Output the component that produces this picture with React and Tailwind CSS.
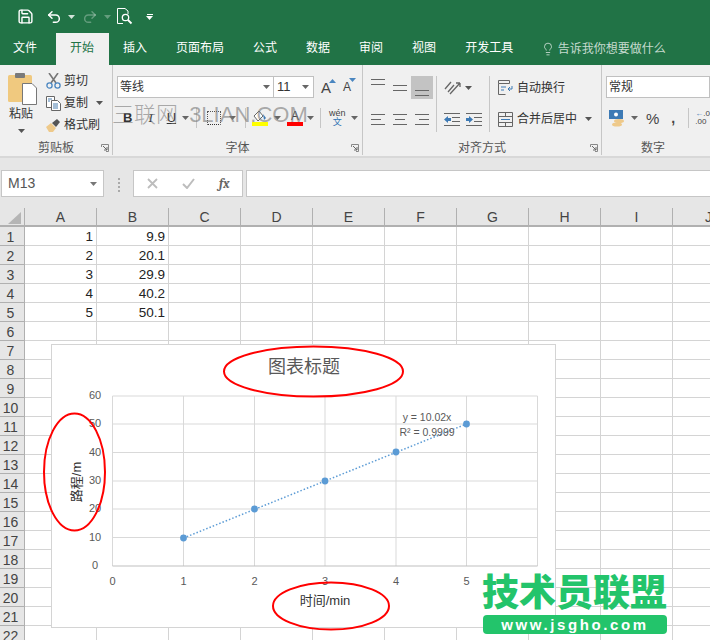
import { Save, Undo2, Redo2, Lightbulb } from 'lucide-react'

const FONT = 'font-["Liberation_Sans","Noto_Sans_CJK_SC",sans-serif]'

const tabs = ['插入', '页面布局', '公式', '数据', '审阅', '视图', '开发工具']
const cols = ['A', 'B', 'C', 'D', 'E', 'F', 'G', 'H', 'I', 'J']
const rows = Array.from({ length: 22 }, (_, i) => i + 1)
const data = { 1: ['1', '9.9'], 2: ['2', '20.1'], 3: ['3', '29.9'], 4: ['4', '40.2'], 5: ['5', '50.1'] }

const points = [
  [183.5, 538],
  [254.5, 509],
  [325, 481],
  [396, 452],
  [466.5, 424],
]
const xTicks = [112.5, 183.5, 254.5, 325, 396, 466.5, 537.5]
const yTicks = [396, 424, 452.5, 481, 509, 537.5, 566]

function Caret({ className = '' }) {
  return (
    <svg width="7" height="4" viewBox="0 0 7 4" className={className}>
      <path d="M0 0h7L3.5 4z" fill="currentColor" />
    </svg>
  )
}

function Lines({ widths, className = '' }) {
  return (
    <span className={`flex flex-col gap-[4px] ${className}`}>
      {widths.map((w, i) => (
        <span key={i} className="h-px bg-[#666]" style={{ width: w }} />
      ))}
    </span>
  )
}

function AlignIcon({ kind }) {
  const a = { left: 'items-start', center: 'items-center', right: 'items-end' }[kind]
  return (
    <span className="flex h-[22px] w-[22px] items-center justify-center">
      <Lines widths={[14, 10, 14]} className={`${a} w-[14px]`} />
    </span>
  )
}

function Launcher() {
  return (
    <svg width="8" height="8" viewBox="0 0 8 8" className="absolute bottom-[3px] right-[3px]">
      <path d="M.5 3V.5H7.5V7.5H5" fill="none" stroke="#888" />
      <path d="M2 2l4 4M6 3v3H3" fill="none" stroke="#666" />
    </svg>
  )
}

function Group({ label, width, children }) {
  return (
    <div className="relative h-[90px] shrink-0 border-r border-[#c6c6c6]" style={{ width }}>
      <div className="h-[75px]">{children}</div>
      <div className="text-center text-[12px] leading-[16px] text-[#555]">{label}</div>
      <Launcher />
    </div>
  )
}

function ClipboardGroup() {
  return (
    <div className="flex pl-[8px] pt-[7px]">
      <div className="flex w-[26px] flex-col items-center">
        <svg width="29" height="33" viewBox="0 0 29 33" className="ml-[3px] shrink-0">
          <rect x="0" y="3" width="24" height="27" rx="1.5" fill="#f0c97f" />
          <rect x="7" y="1" width="10" height="5" rx="1" fill="#7a7a7a" />
          <path d="M14.5 11.5H24l4.5 4.5V32.5H14.5z" fill="#fff" stroke="#777" />
        </svg>
        <span className="mt-[1px] text-[12px] leading-[16px] text-[#333]">粘贴</span>
        <Caret className="mt-[7px] text-[#555]" />
      </div>
      <div className="ml-[12px] flex flex-col gap-[4px] text-[12px] leading-[18px] text-[#333]">
        <div className="flex items-center gap-[3px]">
          <svg width="15" height="16" viewBox="0 0 15 16">
            <path d="M3 0l7 10M12 0L5 10" stroke="#777" strokeWidth="1.6" />
            <circle cx="3.5" cy="12.5" r="2.6" fill="none" stroke="#4a86c0" strokeWidth="1.3" />
            <circle cx="11.5" cy="12.5" r="2.6" fill="none" stroke="#4a86c0" strokeWidth="1.3" />
          </svg>
          <span>剪切</span>
        </div>
        <div className="flex items-center gap-[3px]">
          <svg width="15" height="15" viewBox="0 0 15 15">
            <path d="M.5.5h8v11h-8z" fill="#fff" stroke="#666" />
            <path d="M5.5 4.5h6l3 3v7h-9z" fill="#fff" stroke="#666" />
            <path d="M2 3h4M2 5h2M7 8h5M7 10h5M7 12h5" stroke="#4a7fb0" />
          </svg>
          <span>复制</span>
          <Caret className="ml-[5px] text-[#555]" />
        </div>
        <div className="flex items-center gap-[3px]">
          <svg width="15" height="14" viewBox="0 0 15 14">
            <path d="M0 9l5-4 5 5-3 4H3z" fill="#eec98a" />
            <path d="M6 5l5-4 3 3-4 5z" fill="#555" />
          </svg>
          <span>格式刷</span>
        </div>
      </div>
    </div>
  )
}

function FontGroup() {
  return (
    <div className="pl-[4px] pt-[11px]">
      <div className="flex items-center">
        <div className="flex h-[22px] w-[157px] items-center justify-between border border-[#c0c0c0] bg-white pl-[2px] pr-[3px] text-[12px] text-[#333]">
          <span>等线</span>
          <Caret className="text-[#666]" />
        </div>
        <div className="flex h-[22px] w-[40px] items-center justify-between border border-l-0 border-[#c0c0c0] bg-white pl-[3px] pr-[4px] text-[13px] text-[#333]">
          <span>11</span>
          <Caret className="text-[#666]" />
        </div>
        <span className="relative ml-[7px] text-[15px] leading-none text-[#444]">
          A
          <Caret className="absolute -right-[5px] -top-[1px] rotate-180 text-[#4a86c0]" />
        </span>
        <span className="relative ml-[12px] text-[12px] leading-none text-[#444]">
          A
          <Caret className="absolute -right-[5px] -top-[3px] text-[#4a86c0]" />
        </span>
      </div>
      <div className="mt-[8px] flex h-[24px] items-center text-[13px] text-[#333]">
        <span className="ml-[6px] font-bold">B</span>
        <span className="ml-[16px] font-serif italic">I</span>
        <span className="ml-[14px] underline">U</span>
        <Caret className="ml-[6px] text-[#666]" />
        <span className="ml-[7px] h-[20px] w-px bg-[#c6c6c6]" />
        <span className="ml-[10px] h-[14px] w-[14px] border border-dotted border-[#555] border-b-[#333]" />
        <Caret className="ml-[8px] text-[#666]" />
        <span className="ml-[9px] h-[20px] w-px bg-[#c6c6c6]" />
        <span className="ml-[6px] flex w-[16px] flex-col items-center">
          <svg width="14" height="11" viewBox="0 0 14 11">
            <path d="M6 0L1 5l4 5 5-5z" fill="#fff" stroke="#666" />
            <path d="M10 3l3 4-2 2z" fill="#3d7ab5" />
          </svg>
          <span className="h-[4px] w-[16px] bg-[#ffff00]" />
        </span>
        <Caret className="ml-[6px] text-[#666]" />
        <span className="ml-[6px] flex w-[16px] flex-col items-center text-[12px] leading-[11px] text-[#444]">
          A<span className="h-[4px] w-[16px] bg-[#ff0000]" />
        </span>
        <Caret className="ml-[4px] text-[#666]" />
        <span className="ml-[6px] h-[20px] w-px bg-[#c6c6c6]" />
        <span className="ml-[8px] flex flex-col items-center text-[9px] leading-[9px] text-[#444]">
          wén<span className="text-[#2f75b5]">文</span>
        </span>
        <Caret className="ml-[5px] text-[#666]" />
      </div>
    </div>
  )
}

function AlignGroup() {
  return (
    <div className="flex pl-[4px] pt-[11px]">
      <div className="w-[70px] border-r border-[#c6c6c6] pb-[2px]">
        <div className="flex items-center">
          <span className="flex h-[23px] w-[22px] items-start justify-center pt-[3px]"><Lines widths={[14, 14]} /></span>
          <span className="flex h-[23px] w-[22px] items-center justify-center"><Lines widths={[14, 14]} /></span>
          <span className="flex h-[23px] w-[22px] items-end justify-center bg-[#c3c3c3] pb-[3px]"><Lines widths={[14, 14]} /></span>
        </div>
        <div className="mt-[9px] flex">
          <AlignIcon kind="left" />
          <AlignIcon kind="center" />
          <AlignIcon kind="right" />
        </div>
      </div>
      <div className="w-[53px] border-r border-[#c6c6c6] pl-[7px]">
        <div className="flex h-[23px] items-center text-[#555]">
          <svg width="17" height="15" viewBox="0 0 17 15">
            <path d="M1 9l6-7M4 12l6-7M6 14L16 3M16 3h-4M16 3v4" fill="none" stroke="#666" strokeWidth="1.3" />
          </svg>
          <Caret className="ml-[4px]" />
        </div>
        <div className="mt-[9px] flex h-[22px] items-center gap-[6px]">
          <svg width="16" height="13" viewBox="0 0 16 13">
            <path d="M0 .5h16M8 4.5h8M8 8.5h8M0 12.5h16" stroke="#666" />
            <path d="M0 6.5L4 3v2h3v3H4v2z" fill="#3d7ab5" />
          </svg>
          <svg width="16" height="13" viewBox="0 0 16 13">
            <path d="M0 .5h16M8 4.5h8M8 8.5h8M0 12.5h16" stroke="#666" />
            <path d="M7 6.5L3 3v2H0v3h3v2z" fill="#3d7ab5" />
          </svg>
        </div>
      </div>
      <div className="pl-[8px] text-[12px] text-[#333]">
        <div className="flex h-[23px] items-center gap-[3px]">
          <svg width="16" height="15" viewBox="0 0 16 15">
            <path d="M.5.5h11v3H.5zM.5 3.5v11h7" fill="none" stroke="#666" />
            <path d="M3 7h5M3 10h3" stroke="#3d7ab5" />
            <path d="M14 6v3h-4M12 7l-2 2 2 2" fill="none" stroke="#3d7ab5" />
          </svg>
          <span>自动换行</span>
        </div>
        <div className="mt-[9px] flex h-[22px] items-center gap-[3px]">
          <svg width="15" height="15" viewBox="0 0 15 15">
            <path d="M.5.5h14v14H.5zM.5 4.5h14M.5 10.5h14M7.5.5v4M7.5 10.5v4" fill="none" stroke="#666" />
            <path d="M3 7.5h9" stroke="#3d7ab5" />
          </svg>
          <span className="ml-[1px]">合并后居中</span>
          <Caret className="ml-[5px] text-[#555]" />
        </div>
      </div>
    </div>
  )
}

function NumberGroup() {
  return (
    <div className="pl-[4px] pt-[11px]">
      <div className="flex h-[22px] items-center border border-[#c0c0c0] bg-white pl-[2px] text-[12px] text-[#333]">常规</div>
      <div className="mt-[9px] flex h-[22px] items-center text-[#444]">
        <svg width="16" height="17" viewBox="0 0 16 17" className="ml-[3px]">
          <rect x="0" y="0" width="14" height="9" fill="#3d7ab5" />
          <circle cx="7" cy="4.5" r="2" fill="#fff" />
          <ellipse cx="10" cy="11" rx="5" ry="2" fill="#eec98a" />
          <ellipse cx="8" cy="14.5" rx="5" ry="2" fill="#eec98a" />
        </svg>
        <Caret className="ml-[6px] text-[#666]" />
        <span className="ml-[8px] text-[15px] leading-none">%</span>
        <span className="ml-[12px] text-[14px] font-bold leading-none">,</span>
        <span className="ml-[13px] h-[20px] w-px bg-[#c6c6c6]" />
        <span className="ml-[6px] text-[8px] leading-[8px]">
          <span className="text-[#3d7ab5]">←</span>.0<br />.00
        </span>
      </div>
    </div>
  )
}

function Chart() {
  return (
    <div className="absolute left-[51px] top-[136px] h-[284px] w-[505px] border border-[#d4d4d4] bg-white">
      <svg width="503" height="282" viewBox="52 345 503 282" className="overflow-visible">
        {xTicks.map((x) => (
          <line key={x} x1={x} x2={x} y1="396" y2="566" stroke="#d9d9d9" />
        ))}
        {yTicks.map((y) => (
          <line key={y} x1="112.5" x2="537.5" y1={y} y2={y} stroke={y === 566 ? '#bfbfbf' : '#d9d9d9'} />
        ))}
        <line x1="183.5" y1="538" x2="466.5" y2="424" stroke="#5b9bd5" strokeWidth="1.5" strokeDasharray="1.5 2" />
        {points.map(([x, y]) => (
          <circle key={x} cx={x} cy={y} r="3.4" fill="#5b9bd5" />
        ))}
        <g fill="#595959" fontSize="11" textAnchor="middle">
          {xTicks.map((x, i) => (
            <text key={x} x={x} y="585">{i}</text>
          ))}
          {yTicks.map((y, i) => (
            <text key={y} x="95" y={y + 3}>{60 - i * 10}</text>
          ))}
        </g>
        <g fill="#595959" fontSize="10.5" textAnchor="middle">
          <text x="427" y="421">y = 10.02x</text>
          <text x="427" y="436">R² = 0.9999</text>
        </g>
        <text x="304" y="373" fontSize="18" fill="#595959" textAnchor="middle" fontFamily="Noto Sans CJK SC">图表标题</text>
        <text x="325" y="605" fontSize="13" fill="#333" textAnchor="middle">时间/min</text>
        <text transform="translate(81 482) rotate(-90)" fontSize="13" fill="#333" textAnchor="middle">路程/m</text>
        <g fill="none" stroke="#ff0000" strokeWidth="2">
          <ellipse cx="313.5" cy="371.5" rx="89.5" ry="25" />
          <ellipse cx="74.5" cy="472" rx="30.5" ry="58.5" />
          <ellipse cx="331" cy="606" rx="58" ry="23.5" />
        </g>
      </svg>
    </div>
  )
}

function Sheet() {
  return (
    <div className="relative h-[432px] overflow-hidden bg-white">
      <div className="grid grid-cols-[25px_repeat(10,72px)] text-[14px] leading-[18px]">
        <div className="relative h-[19px] border-b-2 border-r border-[#b0b0b0] bg-[#e6e6e6]">
          <svg width="13" height="12" viewBox="0 0 13 12" className="absolute bottom-[1px] right-[3px]">
            <path d="M13 0v12H0z" fill="#b5b5b5" />
          </svg>
        </div>
        {cols.map((c) => (
          <div key={c} className="h-[19px] border-b-2 border-r border-[#b0b0b0] bg-[#e6e6e6] text-center text-[#444]">{c}</div>
        ))}
        {rows.map((r) => (
          <div key={r} className="contents">
            <div className="h-[19px] border-b border-r border-[#b0b0b0] bg-[#e6e6e6] pr-[3px] pt-[1px] text-center text-[#444]">{r}</div>
            {cols.map((c, i) => (
              <div key={c} className="h-[19px] border-b border-r border-[#d4d4d4] pr-[3px] pt-[1px] text-right text-[13.5px] text-[#222]">
                {data[r] && data[r][i]}
              </div>
            ))}
          </div>
        ))}
      </div>
      <Chart />
    </div>
  )
}

export default function App() {
  return (
    <div className={`relative h-[640px] w-[710px] overflow-hidden bg-[#e6e6e6] ${FONT}`}>
      <div className="flex h-[33px] items-center bg-[#217346] text-white">
        <Save size={17} strokeWidth={2} className="ml-[17px]" />
        <Undo2 size={16} strokeWidth={2.2} className="ml-[12px]" />
        <Caret className="ml-[6px] text-white/80" />
        <Redo2 size={16} strokeWidth={2.2} className="ml-[7px] text-white/30" />
        <Caret className="ml-[6px] text-white/30" />
        <svg width="16" height="17" viewBox="0 0 16 17" className="ml-[6px]">
          <path d="M11 6V3L8 .5H.5v15H6" fill="none" stroke="#fff" />
          <circle cx="8.5" cy="9.5" r="3.2" fill="none" stroke="#fff" strokeWidth="1.3" />
          <path d="M11 12l3.5 3.5" stroke="#fff" strokeWidth="1.8" />
        </svg>
        <span className="ml-[13px] flex flex-col items-center gap-[1px]">
          <span className="h-px w-[6px] bg-white" />
          <Caret className="text-white" />
        </span>
      </div>
      <div className="flex h-[32px] items-stretch bg-[#217346] text-[12px] leading-[20px] text-white">
        <div className="-ml-[1.5px] px-[14.5px] pt-[5px]">文件</div>
        <div className="ml-[4px] bg-[#f0f0f0] px-[14.5px] pt-[5px] text-[#217346]">开始</div>
        {tabs.map((t) => (
          <div key={t} className="px-[14.5px] pt-[5px]">{t}</div>
        ))}
        <div className="ml-[13px] flex items-center gap-[3px] pb-[1px] text-white/75">
          <Lightbulb size={14} strokeWidth={1.5} />
          <span>告诉我你想要做什么</span>
        </div>
      </div>

      <div className="relative flex h-[93px] border-b-2 border-[#d8d8d8] bg-[#f0f0f0]">
        <Group label="剪贴板" width={113}><ClipboardGroup /></Group>
        <Group label="字体" width={250}><FontGroup /></Group>
        <Group label="对齐方式" width={239}><AlignGroup /></Group>
        <div className="h-full flex-1">
          <div className="h-[75px]"><NumberGroup /></div>
          <div className="-ml-[6px] text-center text-[12px] leading-[16px] text-[#555]">数字</div>
        </div>
        <span className="pointer-events-none absolute left-[112px] top-[35px] whitespace-nowrap text-[22px] font-light leading-[30px] text-[#777]/60">
          三联网 <span className="ml-[5px] text-[22px]">3LIAN.COM</span>
        </span>
      </div>

      <div className="flex h-[50px] items-start pl-[1px] pt-[12px] text-[#666]">
        <div className="flex h-[27px] w-[103px] items-center justify-between border border-[#c6c6c6] bg-white pl-[6px] pr-[6px] text-[14px] text-[#555]">
          <span>M13</span>
          <Caret className="text-[#777]" />
        </div>
        <span className="ml-[14px] mt-[8px] flex flex-col gap-[2px]">
          <span className="h-[2px] w-[2px] bg-[#aaa]" />
          <span className="h-[2px] w-[2px] bg-[#aaa]" />
          <span className="h-[2px] w-[2px] bg-[#aaa]" />
          <span className="h-[2px] w-[2px] bg-[#aaa]" />
        </span>
        <div className="ml-[13px] flex h-[27px] w-[110px] items-center border border-[#c6c6c6] bg-white">
          <svg width="11" height="11" viewBox="0 0 11 11" className="ml-[13px]">
            <path d="M1 1l9 9M10 1l-9 9" stroke="#bdbdbd" strokeWidth="1.8" />
          </svg>
          <svg width="13" height="11" viewBox="0 0 13 11" className="ml-[24px]">
            <path d="M1 6l4 4 7-9" fill="none" stroke="#bdbdbd" strokeWidth="2" />
          </svg>
          <span className="ml-[24px] font-serif text-[13px] font-bold italic text-[#666]">fx</span>
        </div>
        <div className="ml-[3px] h-[27px] flex-1 border border-r-0 border-[#c6c6c6] bg-white" />
      </div>

      <Sheet />

      <div className="absolute left-[481px] top-[574px] flex w-[186px] flex-col items-end">
        <span className="whitespace-nowrap text-[37px] font-black leading-[40px] text-[#23c46b]">技术员联盟</span>
        <span className="mt-px h-[19px] w-[184px] rounded-[4px] bg-[#23c46b] text-center text-[15px] font-bold leading-[19px] tracking-[2.6px] text-white">
          www.jsgho.com
        </span>
      </div>
    </div>
  )
}
